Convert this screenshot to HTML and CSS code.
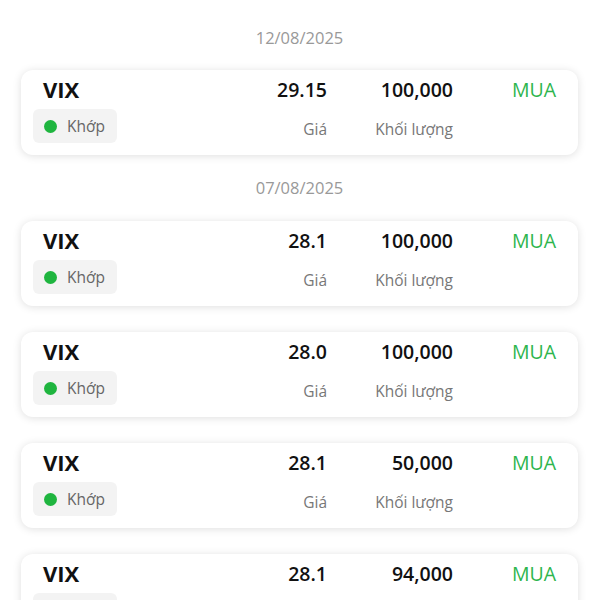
FILE: index.html
```html
<!DOCTYPE html>
<html lang="vi">
<head>
    <meta charset="UTF-8">
    <meta name="viewport" content="width=device-width, initial-scale=1.0">
    <title>Lịch sử lệnh</title>
    <link rel="stylesheet" href="styles.css">
</head>
<body>
    <div class="list">
        <div class="date">12/08/2025</div>
        <div class="group">
            <div class="order">
                <div class="code">VIX</div>
                <div class="num">29.15</div>
                <div class="num">100,000</div>
                <div class="side">MUA</div>
                <div class="status"><span class="dot"></span>Khớp</div>
                <div class="label">Giá</div>
                <div class="label">Khối lượng</div>
                <div></div>
            </div>
        </div>

        <div class="date">07/08/2025</div>
        <div class="group">
            <div class="order">
                <div class="code">VIX</div>
                <div class="num">28.1</div>
                <div class="num">100,000</div>
                <div class="side">MUA</div>
                <div class="status"><span class="dot"></span>Khớp</div>
                <div class="label">Giá</div>
                <div class="label">Khối lượng</div>
                <div></div>
            </div>
            <div class="order">
                <div class="code">VIX</div>
                <div class="num">28.0</div>
                <div class="num">100,000</div>
                <div class="side">MUA</div>
                <div class="status"><span class="dot"></span>Khớp</div>
                <div class="label">Giá</div>
                <div class="label">Khối lượng</div>
                <div></div>
            </div>
            <div class="order">
                <div class="code">VIX</div>
                <div class="num">28.1</div>
                <div class="num">50,000</div>
                <div class="side">MUA</div>
                <div class="status"><span class="dot"></span>Khớp</div>
                <div class="label">Giá</div>
                <div class="label">Khối lượng</div>
                <div></div>
            </div>
            <div class="order">
                <div class="code">VIX</div>
                <div class="num">28.1</div>
                <div class="num">94,000</div>
                <div class="side">MUA</div>
                <div class="status"><span class="dot"></span>Khớp</div>
                <div class="label">Giá</div>
                <div class="label">Khối lượng</div>
                <div></div>
            </div>
        </div>
    </div>
</body>
</html>
```

FILE: styles.css
```css
body {
    font-family: 'Open Sans', 'Noto Sans', sans-serif;
    margin: 0;
    padding: 3px 0 0;
    background-color: #ffffff;
    color: #111;
}

.list {
    padding: 0 22px 0 21px;
}

.date {
    text-align: center;
    font-size: 16.5px;
    line-height: 22px;
    color: #999;
    padding: 24px 0 21px;
}

.group + .date {
    padding-top: 22px;
    padding-bottom: 22px;
}

.group {
    display: flex;
    flex-direction: column;
    gap: 26px;
}

.order {
    display: grid;
    grid-template-columns: 1fr 100px 126px 103px;
    grid-template-rows: 30px 34px;
    row-gap: 5px;
    align-items: center;
    padding: 4px 22px 12px 12px;
    background-color: #fff;
    border-radius: 12px;
    box-shadow: 0 1px 8px rgba(0, 0, 0, 0.13);
}

.code {
    padding-left: 10px;
    font-size: 22px;
    font-weight: 700;
    color: #111;
}

.num {
    text-align: right;
    font-size: 19.5px;
    font-weight: 600;
    color: #111;
}

.side {
    text-align: right;
    font-size: 19.5px;
    color: #2db54d;
}

.status {
    justify-self: start;
    display: flex;
    align-items: center;
    gap: 10px;
    height: 34px;
    padding: 0 12px 0 11px;
    background-color: #f3f3f3;
    border-radius: 6px;
    font-size: 15.5px;
    color: #666;
}

.dot {
    width: 13px;
    height: 13px;
    border-radius: 50%;
    background-color: #1fb53f;
}

.label {
    text-align: right;
    font-size: 15.5px;
    color: #777;
    padding-top: 6px;
}
```
